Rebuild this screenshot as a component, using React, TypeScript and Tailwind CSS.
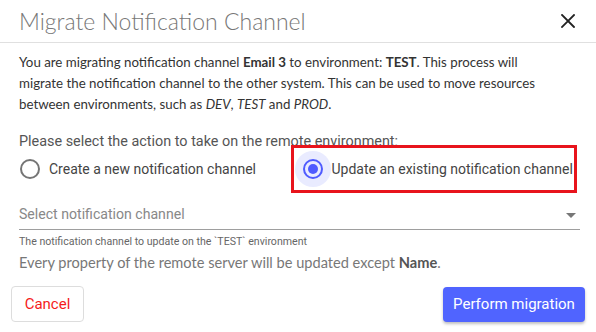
import React from "react";

export default function App() {
  return (
    <div className="w-[596px] h-[332px] bg-white flex flex-col overflow-hidden">
      {/* Header */}
      <div className="h-[43px] shrink-0 flex items-center justify-between pl-[19px] pr-[20px] border-b border-[#e0e0e0]">
        <div
          className="text-[23px] font-light text-[#777777] leading-none pt-[1px] whitespace-nowrap"
          style={{ fontFamily: "Lato, 'Noto Sans', sans-serif" }}
        >
          Migrate Notification Channel
        </div>
        <svg width="14" height="14" viewBox="0 0 14 14" className="mr-[1px]">
          <path d="M1 1 L13 13 M13 1 L1 13" stroke="#222" strokeWidth="1.8" strokeLinecap="square" />
        </svg>
      </div>

      {/* Body */}
      <div className="flex flex-col px-[19px]">
        <p
          className="mt-[9px] text-[13.3px] leading-[21px] text-[#333333] whitespace-nowrap"
          style={{ fontFamily: "Lato, 'Noto Sans', sans-serif" }}
        >
          You are migrating notification channel <b>Email 3</b> to environment: <b>TEST</b>. This process will
          <br />
          migrate the notification channel to the other system. This can be used to move resources
          <br />
          between environments, such as <i>DEV</i>, <i>TEST</i> and <i>PROD</i>.
        </p>

        <div
          className="mt-[17px] text-[14.4px] leading-[20px] text-[#555555] whitespace-nowrap"
          style={{ fontFamily: "Roboto, Arial, sans-serif" }}
        >
          Please select the action to take on the remote environment:
        </div>

        <div
          className="-mt-[7px] flex items-center h-[48px]"
          style={{ fontFamily: "Roboto, Arial, sans-serif" }}
        >
          <div className="flex items-center w-[272px]">
            <span className="ml-[1px] w-[20px] h-[20px] rounded-full border-2 border-[#757575] shrink-0" />
            <span className="ml-[9px] text-[14px] text-[#444444] whitespace-nowrap">
              Create a new notification channel
            </span>
          </div>
          <div className="flex items-center h-[48px] w-[287px] border-[3px] border-[#e8141c] pl-[1px]">
            <span className="relative w-[36px] h-[36px] rounded-full bg-[#e9ebff] flex items-center justify-center shrink-0">
              <span className="w-[20px] h-[20px] rounded-full border-2 border-[#4f5bff] flex items-center justify-center">
                <span className="w-[10px] h-[10px] rounded-full bg-[#4f5bff]" />
              </span>
            </span>
            <span className="ml-[1px] text-[14px] text-[#444444] whitespace-nowrap">
              Update an existing notification channel
            </span>
          </div>
        </div>

        {/* Select */}
        <div
          className="mt-[11px] flex items-center justify-between h-[26px] border-b border-[#9e9e9e] w-[561px]"
          style={{ fontFamily: "Roboto, Arial, sans-serif" }}
        >
          <span className="text-[14.1px] text-[#888888] -mt-[3px]">Select notification channel</span>
          <svg width="10" height="5" viewBox="0 0 10 5" className="mr-[4px] -mt-[3px]">
            <path d="M0 0 L10 0 L5 5 Z" fill="#777" />
          </svg>
        </div>
        <div
          className="mt-[5px] text-[10.6px] leading-[13px] text-[#666666]"
          style={{ fontFamily: "Roboto, Arial, sans-serif" }}
        >
          The notification channel to update on the `TEST` environment
        </div>
        <div
          className="mt-[4px] text-[14.6px] leading-[21px] text-[#777777]"
          style={{ fontFamily: "Lato, 'Noto Sans', sans-serif" }}
        >
          Every property of the remote server will be updated except <b className="text-[#555555]">Name</b>.
        </div>
      </div>

      {/* Footer */}
      <div className="mt-auto mb-[10px] flex items-center justify-between pl-[11px] pr-[11px]">
        <button
          className="h-[36px] w-[73px] rounded-[4px] border border-[#dddddd] bg-white text-[15px] text-[#f51b1b]"
          style={{ fontFamily: "Roboto, Arial, sans-serif" }}
        >
          Cancel
        </button>
        <button
          className="h-[35px] w-[142px] rounded-[4px] bg-[#5064ff] text-white text-[15px] shadow-[0_2px_3px_rgba(0,0,0,0.25)]"
          style={{ fontFamily: "Roboto, Arial, sans-serif" }}
        >
          Perform migration
        </button>
      </div>
    </div>
  );
}
